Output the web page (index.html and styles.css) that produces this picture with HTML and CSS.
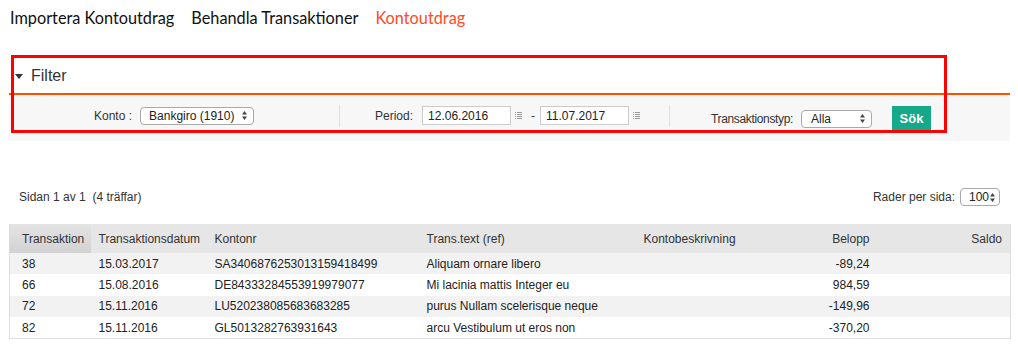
FILE: index.html
```html
<!DOCTYPE html>
<html lang="sv">
<head>
<meta charset="utf-8">
<title>Kontoutdrag</title>
<link rel="stylesheet" href="styles.css">
</head>
<body>
<nav class="nav">
  <a class="nav-item">Importera Kontoutdrag</a>
  <a class="nav-item">Behandla Transaktioner</a>
  <a class="nav-item active">Kontoutdrag</a>
</nav>

<section class="filter">
  <div class="filter-head">
    <span class="caret"></span>
    <span class="filter-title">Filter</span>
  </div>
  <div class="filter-panel">
    <div class="group g1">
      <span class="lbl">Konto :</span>
      <div class="select sel-konto"><span>Bankgiro (1910)</span><svg class="updown" viewBox="0 0 5 9" width="5" height="9"><path d="M0 3.5L2.5 0L5 3.5Z M0 5.5L2.5 9L5 5.5Z" fill="#444"/></svg></div>
    </div>
    <div class="divider"></div>
    <div class="group g2">
      <span class="lbl">Period:</span>
      <div class="input date1">12.06.2016</div>
      <svg class="cal" viewBox="0 0 7 7" width="7" height="7"><g fill="#999"><rect x="0" y="0" width="1" height="1"/><rect x="2" y="0" width="5" height="1"/><rect x="0" y="2" width="1" height="1"/><rect x="2" y="2" width="5" height="1"/><rect x="0" y="4" width="1" height="1"/><rect x="2" y="4" width="5" height="1"/><rect x="0" y="6" width="1" height="1"/><rect x="2" y="6" width="5" height="1"/></g></svg>
      <span class="dash">-</span>
      <div class="input date2">11.07.2017</div>
      <svg class="cal" viewBox="0 0 7 7" width="7" height="7"><g fill="#999"><rect x="0" y="0" width="1" height="1"/><rect x="2" y="0" width="5" height="1"/><rect x="0" y="2" width="1" height="1"/><rect x="2" y="2" width="5" height="1"/><rect x="0" y="4" width="1" height="1"/><rect x="2" y="4" width="5" height="1"/><rect x="0" y="6" width="1" height="1"/><rect x="2" y="6" width="5" height="1"/></g></svg>
    </div>
    <div class="divider"></div>
    <div class="group g3">
      <span class="lbl lbl-typ">Transaktionstyp:</span>
      <div class="select sel-typ"><span>Alla</span><svg class="updown" viewBox="0 0 5 9" width="5" height="9"><path d="M0 3.5L2.5 0L5 3.5Z M0 5.5L2.5 9L5 5.5Z" fill="#444"/></svg></div>
      <button class="btn">Sök</button>
    </div>
  </div>
  <div class="annot"></div>
</section>

<div class="result-bar">
  <span class="pages">Sidan 1 av 1&nbsp;&nbsp;(4 träffar)</span>
  <div class="perpage">
    <span>Rader per sida:</span>
    <div class="select sel-rows"><span>100</span><svg class="updown" viewBox="0 0 5 9" width="5" height="9"><path d="M0 3.5L2.5 0L5 3.5Z M0 5.5L2.5 9L5 5.5Z" fill="#444"/></svg></div>
  </div>
</div>

<table class="grid">
  <colgroup>
    <col class="c1"><col class="c2"><col class="c3"><col class="c4"><col class="c5"><col class="c6"><col class="c7">
  </colgroup>
  <thead>
    <tr>
      <th class="sorted">Transaktion</th>
      <th>Transaktionsdatum</th>
      <th>Kontonr</th>
      <th>Trans.text (ref)</th>
      <th>Kontobeskrivning</th>
      <th class="num">Belopp</th>
      <th class="num">Saldo</th>
    </tr>
  </thead>
  <tbody>
    <tr><td>38</td><td>15.03.2017</td><td>SA3406876253013159418499</td><td>Aliquam ornare libero</td><td></td><td class="num">-89,24</td><td></td></tr>
    <tr><td>66</td><td>15.08.2016</td><td>DE84333284553919979077</td><td>Mi lacinia mattis Integer eu</td><td></td><td class="num">984,59</td><td></td></tr>
    <tr><td>72</td><td>15.11.2016</td><td>LU520238085683683285</td><td>purus Nullam scelerisque neque</td><td></td><td class="num">-149,96</td><td></td></tr>
    <tr><td>82</td><td>15.11.2016</td><td>GL5013282763931643</td><td>arcu Vestibulum ut eros non</td><td></td><td class="num">-370,20</td><td></td></tr>
  </tbody>
</table>
</body>
</html>
```

FILE: styles.css
```css
* { box-sizing: border-box; }
body {
  margin: 0;
  font-family: "Liberation Sans", Arial, sans-serif;
  font-size: 12px;
  color: #333;
  background: #fff;
  width: 1018px;
  height: 349px;
  overflow: hidden;
}

.nav {
  display: flex;
  gap: 17px;
  padding: 8px 0 0 10px;
  height: 37px;
  font-family: Lato, "Open Sans", sans-serif;
  font-size: 16.3px;
  color: #111;
}
.nav-item { white-space: nowrap; }
.nav-item.active { color: #ff4b1f; }

.filter {
  position: relative;
  margin-top: 27px;
  padding: 0 8px 0 9px;
}
.filter-head {
  display: flex;
  align-items: center;
  height: 21px;
  padding-left: 6px;
  border-bottom: 2px solid #ff5000;
  box-sizing: content-box;
  padding-top: 1px;
  padding-bottom: 7px;
}
.caret {
  width: 0; height: 0;
  border-left: 4.5px solid transparent;
  border-right: 4.5px solid transparent;
  border-top: 5px solid #333;
  margin-right: 8px;
  margin-top: 2px;
}
.filter-title {
  font-size: 16px;
  color: #333;
}

.filter-panel {
  display: flex;
  align-items: center;
  height: 46px;
  padding-bottom: 5px;
  background: #f7f7f7;
}
.group {
  display: flex;
  align-items: center;
  height: 100%;
}
.g1 { width: 330px; padding-left: 85px; }
.g2 { width: 329px; padding-left: 35px; }
.g3 { padding-left: 41px; padding-top: 6px; }
.divider {
  width: 1px;
  height: 22px;
  background: #e0e0e0;
}
.lbl { color: #333; white-space: nowrap; }
.lbl-typ { letter-spacing: -0.35px; }

.select {
  display: flex;
  align-items: center;
  justify-content: space-between;
  height: 18px;
  background: #fff;
  border: 1px solid #a9a9a9;
  border-radius: 4px;
  color: #222;
  padding: 0 6px 0 8px;
  font-size: 12px;
}
.updown { display: block; }
.sel-konto { width: 114px; margin-left: 8px; }
.sel-typ { width: 71px; margin-left: 8px; padding-left: 9px; }
.sel-rows { width: 40px; margin-left: 5px; height: 18px; padding: 0 4px 0 8px; }

.input {
  height: 19px;
  width: 89px;
  background: #fff;
  border: 1px solid #ccc;
  padding: 2px 0 0 5px;
  color: #222;
  line-height: 14px;
}
.date1 { margin-left: 9px; }
.cal { margin-left: 4px; }
.dash { margin: 0 5px 0 9px; }

.btn {
  margin-left: 20px;
  width: 39px;
  height: 26px;
  border: 0;
  background: #15a889;
  color: #fff;
  font-family: "Liberation Sans", Arial, sans-serif;
  font-weight: bold;
  font-size: 13px;
  padding: 0;
}

.annot {
  position: absolute;
  left: 11px;
  top: -9px;
  width: 936px;
  height: 78px;
  border: 3px solid #ff0000;
  pointer-events: none;
}

.result-bar {
  display: flex;
  justify-content: space-between;
  align-items: center;
  height: 26px;
  margin: 43px 18px 0 19px;
}
.perpage { display: flex; align-items: center; }

.grid {
  margin: 14px 0 0 9px;
  width: 1001px;
  border-collapse: collapse;
  table-layout: fixed;
  border: 1px solid #ddd;
  border-top: 0;
}
.c1 { width: 81px; }
.c2 { width: 116px; }
.c3 { width: 212px; }
.c4 { width: 217px; }
.c5 { width: 125px; }
.c6 { width: 117px; }
.c7 { width: 133px; }

.grid th {
  height: 29px;
  background: #e6e6e6;
  font-weight: normal;
  text-align: left;
  padding: 0 8px;
  color: #333;
  white-space: nowrap;
}
.grid th:first-child { padding-left: 12px; }
.grid th.sorted {
  background: linear-gradient(#e3e3e3, #d2d2d2);
}
.grid td {
  height: 21.4px;
  padding: 0 8px;
  color: #222;
  white-space: nowrap;
}
.grid td:first-child { padding-left: 12px; }
.grid tbody tr:nth-child(odd) td { background: #f2f2f2; }
.grid .num { text-align: right; }
```
